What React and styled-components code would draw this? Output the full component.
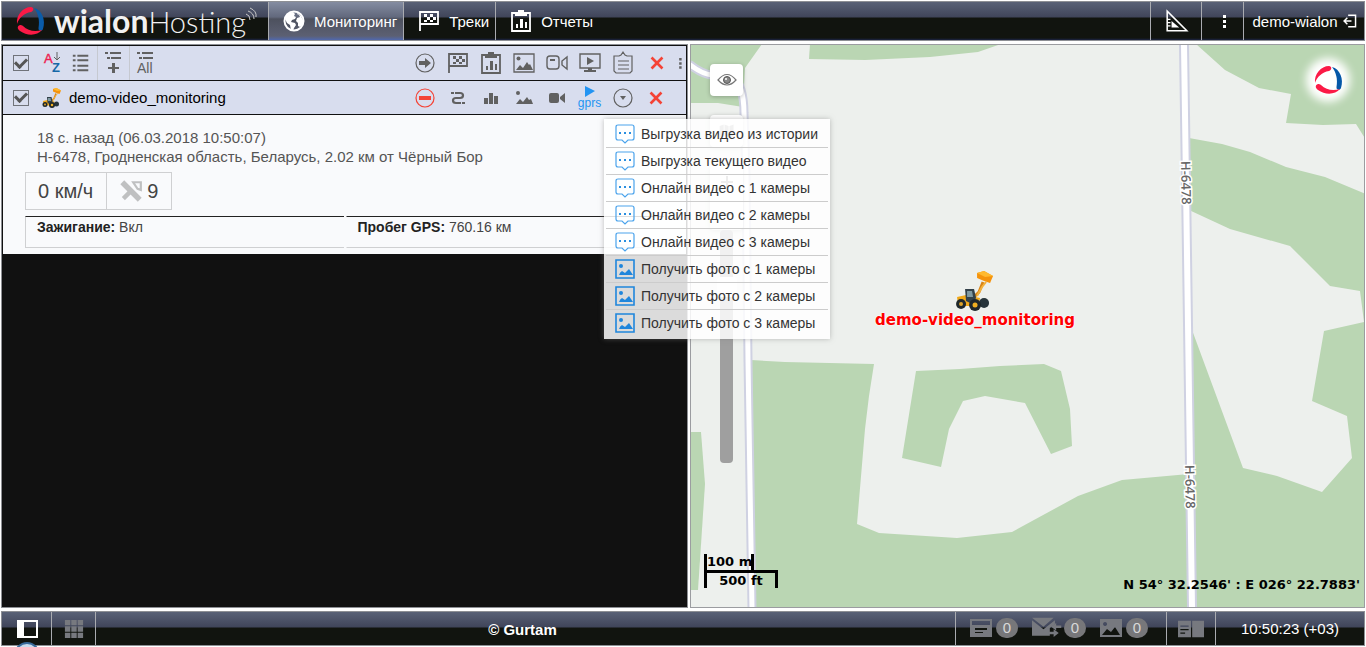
import React, { useState } from "react";
import styled, { createGlobalStyle, css } from "styled-components";

const tabs = [
  { id: "monitoring", label: "Мониторинг", icon: "globe" },
  { id: "tracks", label: "Треки", icon: "flag" },
  { id: "reports", label: "Отчеты", icon: "report" },
];

const commands = [
  { label: "Выгрузка видео из истории", icon: "message" },
  { label: "Выгрузка текущего видео", icon: "message" },
  { label: "Онлайн видео с 1 камеры", icon: "message" },
  { label: "Онлайн видео с 2 камеры", icon: "message" },
  { label: "Онлайн видео с 3 камеры", icon: "message" },
  { label: "Получить фото с 1 камеры", icon: "photo" },
  { label: "Получить фото с 2 камеры", icon: "photo" },
  { label: "Получить фото с 3 камеры", icon: "photo" },
];

const headActions = ["goto", "flag", "report", "picture", "camera", "screen", "clipboard"];
const unitActions = ["stop", "route", "bars", "hills", "videocam", "gprs"];

const counters = [
  { id: "news", icon: "news", value: 0 },
  { id: "mail", icon: "mail", value: 0 },
  { id: "pictures", icon: "pictureSolid", value: 0 },
];

/* 22x22 line icons, coloured by currentColor */
const shapes = {
  globe: (
    <>
      <circle cx="11" cy="11" r="9.500" fill="none" stroke="currentColor" strokeWidth="2" />
      <path fill="currentColor" d="M3 6l3-3 4-1 2 2-1 2 2 1-1 2-3 1-1 2 4 1 1 2-2 3-1 3-2-1-1-5-3-2-2-4zM14 3l4 3 2 4v4l-3 3-2-1v-3l-2-2 1-3 3-1-1-2-2-1z" />
    </>
  ),
  flag: (
    <>
      <path fill="none" stroke="currentColor" strokeWidth="1.8" d="M2 21V2h18v12H2" />
      <path fill="currentColor" d="M6 4h3v3H6zM12 4h3v3h-3zM9 7h3v3H9zM15 7h3v3h-3zM6 10h3v2H6zM12 10h3v2h-3z" />
    </>
  ),
  report: (
    <>
      <path fill="none" stroke="currentColor" strokeWidth="1.8" d="M2 3h18v18H2z" />
      <path fill="currentColor" d="M5 2h3V0h6v2h3v4H5zM6 14h2v4H6zM10 9h3v9h-3zM15 12h2v6h-2z" />
    </>
  ),
  goto: (
    <>
      <circle cx="11" cy="11" r="9" fill="none" stroke="currentColor" strokeWidth="1.2" />
      <path fill="currentColor" d="M5 9h6V6l6 5-6 5v-3H5z" />
    </>
  ),
  picture: (
    <>
      <path fill="none" stroke="currentColor" strokeWidth="1.3" d="M1 2h20v18H1z" />
      <circle cx="5.500" cy="6.500" r="2" fill="currentColor" />
      <path fill="currentColor" d="M3 18l4-5 3 3 4-6 2 3 1-1 3 6z" />
    </>
  ),
  camera: (
    <g fill="none" stroke="currentColor" strokeWidth="1.4">
      <rect x="1" y="4" width="12" height="13" rx="3" />
      <path d="M16 9l5-4v12l-5-4z" />
      <path strokeWidth="2" d="M4 8h5" />
    </g>
  ),
  screen: (
    <>
      <path fill="none" stroke="currentColor" strokeWidth="1.4" d="M1 2h20v14H1z" />
      <path fill="currentColor" d="M8 5l7 4-7 4zM9 16h4v2h4v2H5v-2h4z" />
    </>
  ),
  clipboard: (
    <g fill="none" stroke="currentColor" strokeWidth="1.2">
      <path d="M2 4h5l2-1 2-3 2 3 2 1h5v15l-2 2H4l-2-2zM6 9h11M6 13h11M6 17h11" />
    </g>
  ),
  cross: <path fill="none" stroke="currentColor" strokeWidth="2.4" d="M6 6l10 10M16 6L6 16" />,
  stop: (
    <>
      <circle cx="11" cy="11" r="9" fill="none" stroke="currentColor" strokeWidth="1.2" />
      <path fill="currentColor" d="M5 9h12v4H5z" />
    </>
  ),
  route: (
    <>
      <path fill="none" stroke="currentColor" strokeWidth="2.200" d="M8 6h5q3 0 3 2.500T13 11H9q-3 0-3 2.500T9 16h5" />
      <path fill="currentColor" d="M4 5h3v2H4zM15 15h3v2h-3z" />
    </>
  ),
  bars: <path fill="currentColor" d="M4 11h4v6H4zM9 6h4v11H9zM14 9h4v8h-4z" />,
  hills: (
    <>
      <circle cx="5" cy="6" r="2" fill="currentColor" />
      <path fill="currentColor" d="M3 17l4-5 3 3 4-5 2 3 2-1 2 5z" />
    </>
  ),
  videocam: <path fill="currentColor" d="M5 6h6q2 0 2 2v6q0 2-2 2H5q-2 0-2-2V8q0-2 2-2zM14 10l5-4v10l-5-4z" />,
  menu: (
    <>
      <circle cx="11" cy="11" r="9" fill="none" stroke="currentColor" strokeWidth="1.2" />
      <path fill="currentColor" d="M8 9h6l-3 4z" />
    </>
  ),
  message: (
    <>
      <path fill="none" stroke="#4aa3ec" strokeWidth="1.2" d="M4 2h14q2 0 2 2v11q0 2-2 2h-4l-3 3-3-3H4q-2 0-2-2V4q0-2 2-2z" />
      <path fill="#2a8fe0" d="M5 9h2v2H5zM10 9h2v2h-2zM15 9h2v2h-2z" />
    </>
  ),
  photo: (
    <>
      <path fill="none" stroke="#1f86dc" strokeWidth="1.6" d="M2 2h18v18H2z" />
      <circle cx="7" cy="8" r="2" fill="#1f86dc" />
      <path fill="#1f86dc" d="M5 17q1-3 3-4l3 2 4-4 4 6z" />
    </>
  ),
  list: <path fill="currentColor" d="M2 2h3v2H2zM7 2h12v2H7zM2 7h3v2H2zM7 7h12v2H7zM2 13h3v2H2zM7 13h12v2H7zM2 18h3v2H2zM7 18h12v2H7z" />,
  addList: <path fill="currentColor" d="M2 0h3v2H2zM7 0h11v2H7zM4 5h3v2H4zM8 5h10v2H8zM9 11h3v4h4v2h-4v4H9v-4H5v-2h4z" />,
  triangle: (
    <>
      <path fill="none" stroke="currentColor" strokeWidth="1.4" d="M2 2v18h18z" />
      <path fill="currentColor" d="M6 11v6h7zM2 9h3v1H2zM2 12h3v1H2zM2 15h3v1H2z" />
    </>
  ),
  kebab: <path fill="currentColor" d="M10 5h3v3h-3zM10 10h3v3h-3zM10 15h3v3h-3z" />,
  exit: (
    <path fill="none" stroke="currentColor" strokeWidth="1.8" d="M10 4h9v14h-9M14 11H5M9 7l-4 4 4 4" />
  ),
  satellite: (
    <g stroke="#bfc0c1" fill="none">
      <path strokeWidth="5" d="M3 3l16 16" />
      <path strokeWidth="4" d="M4 18l8-8" />
      <path strokeWidth="2" d="M13 3h7v7l-3-1z" />
    </g>
  ),
  panel: (
    <path fill="#fff" fillRule="evenodd" d="M1 2h21v18H1zM8 4v14h12V4z" />
  ),
  grid: (
    <path fill="currentColor" d="M1 1h6v6H1zM8 1h6v6H8zM15 1h6v6h-6zM1 8h6v6H1zM8 8h6v6H8zM15 8h6v6h-6zM1 15h6v6H1zM8 15h6v6H8zM15 15h6v6h-6z" />
  ),
  news: (
    <path fill="currentColor" fillRule="evenodd" d="M0 2h22v18H0zM2 4v4h18V4zM5 11v2h12v-2zM5 15v1h8v-1z" />
  ),
  mail: (
    <>
      <path fill="currentColor" d="M0 3h17l-8 7zM0 5l9 7 9-7v3l-4 3v6H0z" />
      <path fill="currentColor" d="M15 10l4-3v2h4v2h-4v2zM21 15l-4 3v-2h-4v-2h4v-2z" />
    </>
  ),
  pictureSolid: (
    <path fill="currentColor" fillRule="evenodd" d="M0 2h22v18H0zM5 5a2 2 0 1 0 .1 0zM2 18h18l-5-8-4 5-4-3z" />
  ),
  notes: (
    <path fill="currentColor" fillRule="evenodd" d="M0 4h11v14H0zM12 4h10v14H12zM2 8v1h7V8zM2 11v1h7v-1zM2 14v1h4v-1z" />
  ),
  eye: (
    <>
      <path fill="none" stroke="#777" strokeWidth="1.2" d="M2 11q9-11 18 0q-9 10-18 0z" />
      <circle cx="11" cy="11" r="3.500" fill="#888" stroke="#555" />
      <circle cx="10" cy="10" r="1" fill="#fff" />
    </>
  ),
  maps: <path fill="#aaa" d="M2 5l5-2v14l-5 2zM8 3l5 2v14l-5-2zM14 5l5-2v14l-5 2z" />,
  plus: <path stroke="#888" strokeWidth="2" d="M5 11h12M11 5v12" />,
  minus: <path stroke="#888" strokeWidth="2" d="M5 11h12" />,
};

function Icon({ name, size = 22 }) {
  return (
    <svg width={size} height={size} viewBox="0 0 22 22" aria-hidden="true">
      {shapes[name]}
    </svg>
  );
}

function Swirl({ size, blue }) {
  return (
    <svg width={size} height={size} viewBox="0 0 28 28" aria-hidden="true">
      <path fill={blue} d="M18 1C26 3 30 13 27 22c-1 3-5 2-4.500-1C24 13 22 6 18 1z" />
      <path fill="#fb1a46" d="M15 0C7 0 0 8 1 17 3 11 8 6 15 5c3-1 3-5 0-5z" />
      <path fill="#fb1a46" d="M4 18c-3 1-3 4 0 6 7 5 17 5 22-1-7 2-14 1-19-4-1-1-2-1-3-1z" />
    </svg>
  );
}

function Loader({ size }) {
  return (
    <svg width={size} height={size} viewBox="0 0 40 40" aria-hidden="true">
      <path fill="none" stroke="#d98414" strokeWidth="3" d="M18 27l6-6 4-10" />
      <path fill="none" stroke="#f3b23d" strokeWidth="2" d="M22 25l5-9 4-5" />
      <path fill="#f5930c" d="M22 2l7-2 9 5-3 7-6-2-7-3z" />
      <path fill="#ffb92e" d="M22 2l7-2 9 5-8 1z" />
      <path fill="#f0a818" d="M2 26l9-2 14 3-2 8H3z" />
      <path fill="#334149" d="M10 18h9l2 9-4 6-6-3z" />
      <path fill="#7f99a1" d="M12 20h5l1 6h-6z" />
      <circle cx="6" cy="33" r="5" fill="#1f282b" />
      <circle cx="6" cy="33" r="2" fill="#dda329" />
      <circle cx="29" cy="32" r="5" fill="#27343a" />
      <circle cx="20" cy="34" r="6" fill="#1f282b" />
      <circle cx="20" cy="34" r="2.500" fill="#efaf22" />
    </svg>
  );
}

function MapCanvas() {
  const green = "#bad6b3";
  const field = "#edf0ed";
  return (
    <MapDrawing viewBox="1 1 673 562" preserveAspectRatio="xMinYMin slice" aria-hidden="true">
      <rect width="674" height="564" fill={field} />
      <g fill={green}>
        <path d="M0 0h72L55 24l-2 39-25-4H0z" />
        <path d="M120 0l-1 15 56 1 65-3 48-5 23-8z" />
        <path d="M506 0l29 26 34 18 32 6-5 29 37 2 33-1 10 16V0z" />
        <path d="M499 94l33 6 28 8 36 15 39 10 41 17v414H499z" />
        <path d="M61 316l34 2 89 2-5 32-4 33-8 95 22 9 78 5 55-6 66-36 44-16 67-6v134H64z" />
        <path d="M226 327l44-2 40-3 44-2 17 7 9 38 2 37-21 8-26-51-40-7-22 5-14 28-8 38-39-9z" />
        <path d="M0 388h11l4 52-7 106H0z" />
      </g>
      <path
        fill={field}
        d="M499 166l41 19 60 17 40 40 30 5 4 31-40 9-12 70 35 15 5 42-30 34-45-16-34-8-51-138z"
      />
      {[["#cfd1e2", 9], ["#ffffff", 5]].map(([color, width]) => (
        <g key={color} fill="none" stroke={color}>
          <path strokeWidth={width} d="M-1 20q14 11 24 11h20q11 12 11 38l2 61 2 186 4 248" />
          <path strokeWidth={width + 1} d="M494 0l4 280 4 284" />
        </g>
      ))}
      <g
        fontFamily="Open Sans, sans-serif"
        fontSize="13"
        fontWeight="600"
        fill="#666"
        stroke="#fff"
        strokeWidth="3"
        paintOrder="stroke"
      >
        <text transform="translate(491 117) rotate(89)">Н-6478</text>
        <text transform="translate(495 421) rotate(89)">Н-6478</text>
      </g>
    </MapDrawing>
  );
}

export default function App() {
  const [activeTab, setActiveTab] = useState("monitoring");
  const [zoom, setZoom] = useState(78);

  return (
    <Page>
      <GlobalStyle />

      <Header>
        <Brand href="#">
          <Swirl size={28} blue="#0a5ca8" />
          <BrandName>
            <b>wialon</b>Hosting
          </BrandName>
          <Waves width="12" height="14" viewBox="0 0 12 14" aria-hidden="true">
            <path d="M1 6q4 1 4 6M3 3q6 2 6 8M5 0q7 3 6 9" />
          </Waves>
        </Brand>
        <Tabs>
          {tabs.map((tab) => (
            <Tab key={tab.id} $active={tab.id === activeTab} onClick={() => setActiveTab(tab.id)}>
              <Icon name={tab.icon} />
              {tab.label}
            </Tab>
          ))}
        </Tabs>
        <HeaderTool $width={51} aria-label="Инструменты">
          <Icon name="triangle" size={24} />
        </HeaderTool>
        <HeaderTool $width={42} aria-label="Меню">
          <Icon name="kebab" />
        </HeaderTool>
        <HeaderTool $width={121}>
          demo-wialon
          <Icon name="exit" size={18} />
        </HeaderTool>
      </Header>

      <Main>
        <UnitsPanel>
          <Toolbar>
            <Checkbox type="checkbox" defaultChecked aria-label="Все объекты" />
            <SortButton aria-label="Сортировка">
              <svg width="18" height="22" viewBox="0 0 18 22" aria-hidden="true">
                <text x="0" y="11" fontSize="13" fill="#ee2050" stroke="#ee2050" strokeWidth="0.400">A</text>
                <text x="8" y="20" fontSize="13" fontWeight="bold" fill="#1668a6">Z</text>
                <path fill="none" stroke="#616161" d="M13 0v8M10 5l3 3 3-3" />
              </svg>
            </SortButton>
            <ListButton aria-label="Список">
              <Icon name="list" size={20} />
            </ListButton>
            <ListButton $divided aria-label="Добавить">
              <Icon name="addList" />
            </ListButton>
            <ListButton $divided>
              <svg width="20" height="22" viewBox="0 0 20 22" aria-hidden="true">
                <path fill="currentColor" d="M1 0h3v2H1zM6 0h11v2H6zM3 5h3v2H3zM7 5h10v2H7z" />
                <text x="1" y="21" fontSize="14" fill="currentColor">All</text>
              </svg>
            </ListButton>
            <Actions>
              {headActions.map((name) => (
                <ActionButton key={name} aria-label={name}>
                  <Icon name={name} />
                </ActionButton>
              ))}
              <ActionButton $tone="#f44336" $wide aria-label="Удалить">
                <Icon name="cross" size={24} />
              </ActionButton>
              <MoreButton aria-label="Ещё">
                <Icon name="kebab" size={18} />
              </MoreButton>
            </Actions>
          </Toolbar>

          <UnitRow>
            <Checkbox type="checkbox" id="unit" defaultChecked />
            <Loader size={20} />
            <UnitName htmlFor="unit">demo-video_monitoring</UnitName>
            <Actions>
              {unitActions.map((name) =>
                name === "gprs" ? (
                  <ActionButton key={name} $tone="#2394f2">
                    <Gprs>
                      <svg width="12" height="11" viewBox="0 0 12 11" aria-hidden="true">
                        <path fill="currentColor" d="M1 0l10 5-10 6z" />
                      </svg>
                      gprs
                    </Gprs>
                  </ActionButton>
                ) : (
                  <ActionButton key={name} $tone={name === "stop" ? "#f44336" : undefined} aria-label={name}>
                    <Icon name={name} />
                  </ActionButton>
                )
              )}
              <MenuAnchor>
                <ActionButton aria-label="Команды">
                  <Icon name="menu" />
                </ActionButton>
                <CommandMenu>
                  {commands.map((command) => (
                    <Command key={command.label}>
                      <Icon name={command.icon} />
                      {command.label}
                    </Command>
                  ))}
                </CommandMenu>
              </MenuAnchor>
              <ActionButton $tone="#f44336" aria-label="Убрать из списка">
                <Icon name="cross" size={24} />
              </ActionButton>
              <RowEnd />
            </Actions>
          </UnitRow>

          <Details>
            <Address>18 с. назад (06.03.2018 10:50:07)</Address>
            <Address>Н-6478, Гродненская область, Беларусь, 2.02 км от Чёрный Бор</Address>
            <Readings>
              <Reading>0 км/ч</Reading>
              <Reading>
                <Icon name="satellite" size={24} />9
              </Reading>
            </Readings>
            <Sensors>
              <Sensor>
                <b>Зажигание:</b> Вкл
              </Sensor>
              <Sensor>
                <b>Пробег GPS:</b> 760.16 км
              </Sensor>
            </Sensors>
          </Details>
        </UnitsPanel>

        <MapPanel>
          <MapCanvas />
          <MapControls>
            <MapButton aria-label="Видимость">
              <Icon name="eye" />
            </MapButton>
            <MapButton aria-label="Слои">
              <Icon name="maps" size={18} />
            </MapButton>
            <ZoomButtons>
              <ZoomButton aria-label="Приблизить">
                <Icon name="plus" />
              </ZoomButton>
              <ZoomButton aria-label="Отдалить">
                <Icon name="minus" />
              </ZoomButton>
            </ZoomButtons>
            <ZoomSlider
              type="range"
              aria-label="Масштаб"
              value={zoom}
              onChange={(e) => setZoom(Number(e.target.value))}
            />
          </MapControls>
          <MapLogo>
            <Swirl size={28} blue="#0558a8" />
          </MapLogo>
          <Marker>
            <Loader size={40} />
            demo-video_monitoring
          </Marker>
          <Scale>
            <ScaleMetric>100 m</ScaleMetric>
            <ScaleImperial>500 ft</ScaleImperial>
          </Scale>
          <Coordinates>N 54° 32.2546' : E 026° 22.7883'</Coordinates>
        </MapPanel>
      </Main>

      <Footer>
        <FooterButton $width={50} aria-label="Панель">
          <Icon name="panel" />
          <Knob />
        </FooterButton>
        <FooterButton $width={44} aria-label="Приложения">
          <Icon name="grid" size={20} />
        </FooterButton>
        <Copyright>© Gurtam</Copyright>
        <Counters>
          {counters.map((item) => (
            <Counter key={item.id}>
              <Icon name={item.icon} size={item.id === "mail" ? 28 : 22} />
              <Badge>{item.value}</Badge>
            </Counter>
          ))}
        </Counters>
        <FooterButton $width={49} $left aria-label="Заметки">
          <Icon name="notes" size={26} />
        </FooterButton>
        <Clock>10:50:23 (+03)</Clock>
      </Footer>
    </Page>
  );
}

const GlobalStyle = createGlobalStyle`
  * {
    box-sizing: border-box;
  }

  body {
    margin: 0;
    background: #ffffff;
    font-family: "Liberation Sans", Arial, sans-serif;
    font-size: 15px;
    overflow: hidden;
  }

  button {
    font: inherit;
    color: inherit;
    background: none;
    border: 0;
    padding: 0;
    cursor: pointer;
  }

  svg {
    display: block;
    flex: none;
    overflow: visible;
  }
`;

const centered = css`
  display: flex;
  align-items: center;
  justify-content: center;
`;

const Page = styled.div`
  display: flex;
  flex-direction: column;
  gap: 3px;
  height: 100vh;
  padding: 1px;
`;

const Header = styled.header`
  display: flex;
  flex: none;
  height: 40px;
  border: 1px solid #8d8f94;
  color: #ffffff;
  background: linear-gradient(180deg, #596176 0, #40455a 15px, #11140f 16px, #11140f 36px, #1c2444 38px);
`;

const Brand = styled.a`
  display: flex;
  align-items: center;
  gap: 10px;
  width: 266px;
  padding-left: 14px;
  color: #f1f1f1;
  text-decoration: none;
`;

const BrandName = styled.span`
  font-family: Lato, sans-serif;
  font-size: 29px;
  font-weight: 300;
  line-height: 36px;

  b {
    font-size: 32px;
    font-weight: 700;
  }
`;

const Waves = styled.svg`
  align-self: flex-start;
  margin: 6px 0 0 -11px;
  fill: none;
  stroke: #c8c8c8;
`;

const Tabs = styled.nav`
  display: flex;
  flex: 1;
`;

const Tab = styled.button`
  ${centered}
  gap: 9px;
  padding: 0 6px 0 14px;
  border-right: 1px solid #a9abb0;

  &:last-child {
    border-right: 0;
  }

  ${(props) =>
    props.$active &&
    css`
      border-left: 1px solid #a9abb0;
      background: linear-gradient(180deg, #848ca1 0, #62697d 15px, #4d515e 17px, #5c6073 34px, #5068ae 38px);
    `}
`;

const HeaderTool = styled.button`
  ${centered}
  gap: 2px;
  width: ${(props) => props.$width}px;
  padding-left: 2px;
  border-left: 1px solid #a9abb0;
`;

const Main = styled.main`
  display: grid;
  grid-template-columns: 687fr 675fr;
  gap: 2px;
  flex: 1;
  min-height: 0;
`;

const UnitsPanel = styled.section`
  position: relative;
  z-index: 1;
  border: 1px solid #8d8f94;
  background: #111111;
  padding: 1px;
`;

const rowBase = css`
  display: flex;
  align-items: center;
  padding-left: 10px;
  background: #d8ddee;
  color: #616161;
  border-bottom: 1px solid #111111;
`;

const Toolbar = styled.div`
  ${rowBase}
  height: 35px;
`;

const UnitRow = styled.div`
  ${rowBase}
  height: 34px;
`;

const Checkbox = styled.input`
  appearance: none;
  ${centered}
  width: 16px;
  height: 16px;
  margin: 0 13px 0 0;
  border: 1px solid #70737a;

  &:checked::after {
    content: "";
    width: 9px;
    height: 5px;
    margin-bottom: 3px;
    border: solid #555555;
    border-width: 0 0 3px 3px;
    transform: rotate(-45deg);
  }
`;

const SortButton = styled.button`
  width: 20px;
  margin-left: 2px;
`;

const ListButton = styled.button`
  ${centered}
  width: ${(props) => (props.$divided ? 32 : 33)}px;
  height: 34px;
  border-left: ${(props) => (props.$divided ? "1px solid #c6c9d0" : "0")};
`;

const Actions = styled.div`
  display: flex;
  margin-left: auto;
`;

const ActionButton = styled.button`
  ${centered}
  width: ${(props) => (props.$wide ? 35 : 33)}px;
  height: 33px;
  color: ${(props) => props.$tone || "#616161"};
`;

const MoreButton = styled.button`
  ${centered}
  width: 12px;
`;

const RowEnd = styled.span`
  width: 14px;
`;

const UnitName = styled.label`
  margin-left: 7px;
  color: #000000;
`;

const Gprs = styled.span`
  display: flex;
  flex-direction: column;
  align-items: center;
  font-size: 12px;
  line-height: 12px;
`;

const MenuAnchor = styled.div`
  position: relative;
`;

const CommandMenu = styled.div`
  position: absolute;
  top: 38px;
  left: -2px;
  padding: 2px;
  background: rgba(255, 255, 255, 0.85);
  box-shadow: 0 0 5px rgba(130, 130, 130, 0.5);
`;

const Command = styled.button`
  display: flex;
  align-items: center;
  gap: 5px;
  width: 222px;
  height: 27px;
  padding: 0 0 1px 8px;
  color: #333333;
  font-size: 14px;
  white-space: nowrap;
  border-bottom: 1px solid #cccccc;

  &:last-child {
    border-bottom: 0;
  }
`;

const Details = styled.div`
  padding: 13px 22px 6px;
  background: #f9fafc;
  color: #555555;
`;

const Address = styled.div`
  padding-left: 12px;
  line-height: 19px;
`;

const Readings = styled.div`
  display: inline-flex;
  margin-top: 6px;
  border: 1px solid #cfd0d2;
  color: #444444;
  font-size: 20px;
`;

const Reading = styled.div`
  ${centered}
  gap: 4px;
  height: 36px;
  padding: 0 13px 0 12px;

  & + & {
    border-left: 1px solid #cfd0d2;
  }
`;

const Sensors = styled.div`
  display: grid;
  grid-template-columns: 1fr 1fr;
  gap: 2px;
  margin-top: 6px;
`;

const Sensor = styled.div`
  height: 32px;
  padding: 2px 11px;
  border: 1px solid #cfd0d2;
  border-top-color: #222222;
  border-right: 0;
  color: #444444;
  font-size: 14px;

  & + & {
    border-left-color: transparent;
  }

  b {
    color: #222222;
  }
`;

const MapPanel = styled.section`
  position: relative;
  overflow: hidden;
  border: 1px solid #9b9ca0;
`;

const MapDrawing = styled.svg`
  width: 100%;
  height: 100%;
`;

const MapControls = styled.div`
  position: absolute;
  top: 19px;
  left: 19px;
  display: flex;
  flex-direction: column;
  align-items: center;
`;

const MapButton = styled.button`
  ${centered}
  width: 33px;
  height: 32px;
  margin-bottom: 19px;
  border-radius: 4px;
  background: #ffffff;
  box-shadow: 0 1px 4px rgba(0, 0, 0, 0.25);
`;

const ZoomButtons = styled.div`
  border-radius: 4px;
  background: #ffffff;
  box-shadow: 0 1px 4px rgba(0, 0, 0, 0.25);
`;

const ZoomButton = styled.button`
  ${centered}
  width: 33px;
  height: 32px;
`;

const ZoomSlider = styled.input`
  appearance: none;
  writing-mode: vertical-lr;
  direction: rtl;
  width: 13px;
  height: 233px;
  margin: 0;
  border-radius: 4px;
  background: #9f9f9f;

  &::-webkit-slider-thumb {
    appearance: none;
    width: 20px;
    height: 20px;
    border-radius: 4px;
    background: #ffffff;
  }
`;

const MapLogo = styled.div`
  position: absolute;
  top: 21px;
  right: 22px;
  border-radius: 50%;
  background: #ffffff;
  box-shadow: 0 0 8px 8px #ffffff;
`;

const mapText = css`
  font-family: Verdana, "DejaVu Sans", sans-serif;
  font-size: 13px;
  font-weight: bold;
`;

const Marker = styled.div`
  ${mapText}
  position: absolute;
  top: 226px;
  left: 284px;
  transform: translateX(-50%);
  display: flex;
  flex-direction: column;
  align-items: center;
  color: #ff0000;
  font-size: 15px;
  text-shadow: 0 0 2px #ffffff, 0 0 2px #ffffff;
`;

const Scale = styled.div`
  ${mapText}
  position: absolute;
  left: 13px;
  bottom: 19px;
  line-height: 16px;
  text-align: center;
`;

const ScaleMetric = styled.div`
  width: 50px;
  height: 16px;
  border: solid #000000;
  border-width: 0 3px;
  white-space: nowrap;
`;

const ScaleImperial = styled.div`
  width: 74px;
  height: 18px;
  border: solid #000000;
  border-width: 3px 3px 0;
`;

const Coordinates = styled.div`
  ${mapText}
  position: absolute;
  right: 4px;
  bottom: 15px;
`;

const Footer = styled.footer`
  display: flex;
  flex: none;
  height: 35px;
  border: 1px solid #8d8f94;
  color: #ffffff;
  background: linear-gradient(180deg, #596176 0, #40455a 15px, #11140f 16px);
`;

const FooterButton = styled.button`
  ${centered}
  position: relative;
  width: ${(props) => props.$width}px;
  color: #77797f;
  border: solid #a9abb0;
  border-width: ${(props) => (props.$left ? "0 0 0 1px" : "0 1px 0 0")};
`;

const Knob = styled.span`
  position: absolute;
  top: 30px;
  left: 12px;
  width: 26px;
  height: 26px;
  border: 2px solid #386a9a;
  border-radius: 50%;
  background: #c9dced;
`;

const Copyright = styled.div`
  ${centered}
  flex: 1;
  padding: 2px 6px 0 0;
  font-weight: bold;
`;

const Counters = styled.div`
  ${centered}
  gap: 14px;
  width: 211px;
  padding: 0 4px 2px 0;
  border-left: 1px solid #a9abb0;
  color: #77797f;
`;

const Counter = styled.div`
  display: flex;
  align-items: center;
  gap: 4px;
`;

const Badge = styled.span`
  ${centered}
  width: 22px;
  height: 20px;
  border-radius: 10px;
  background: #77777a;
  color: #d8d8d8;
`;

const Clock = styled.div`
  ${centered}
  width: 149px;
  border-left: 1px solid #a9abb0;
`;
